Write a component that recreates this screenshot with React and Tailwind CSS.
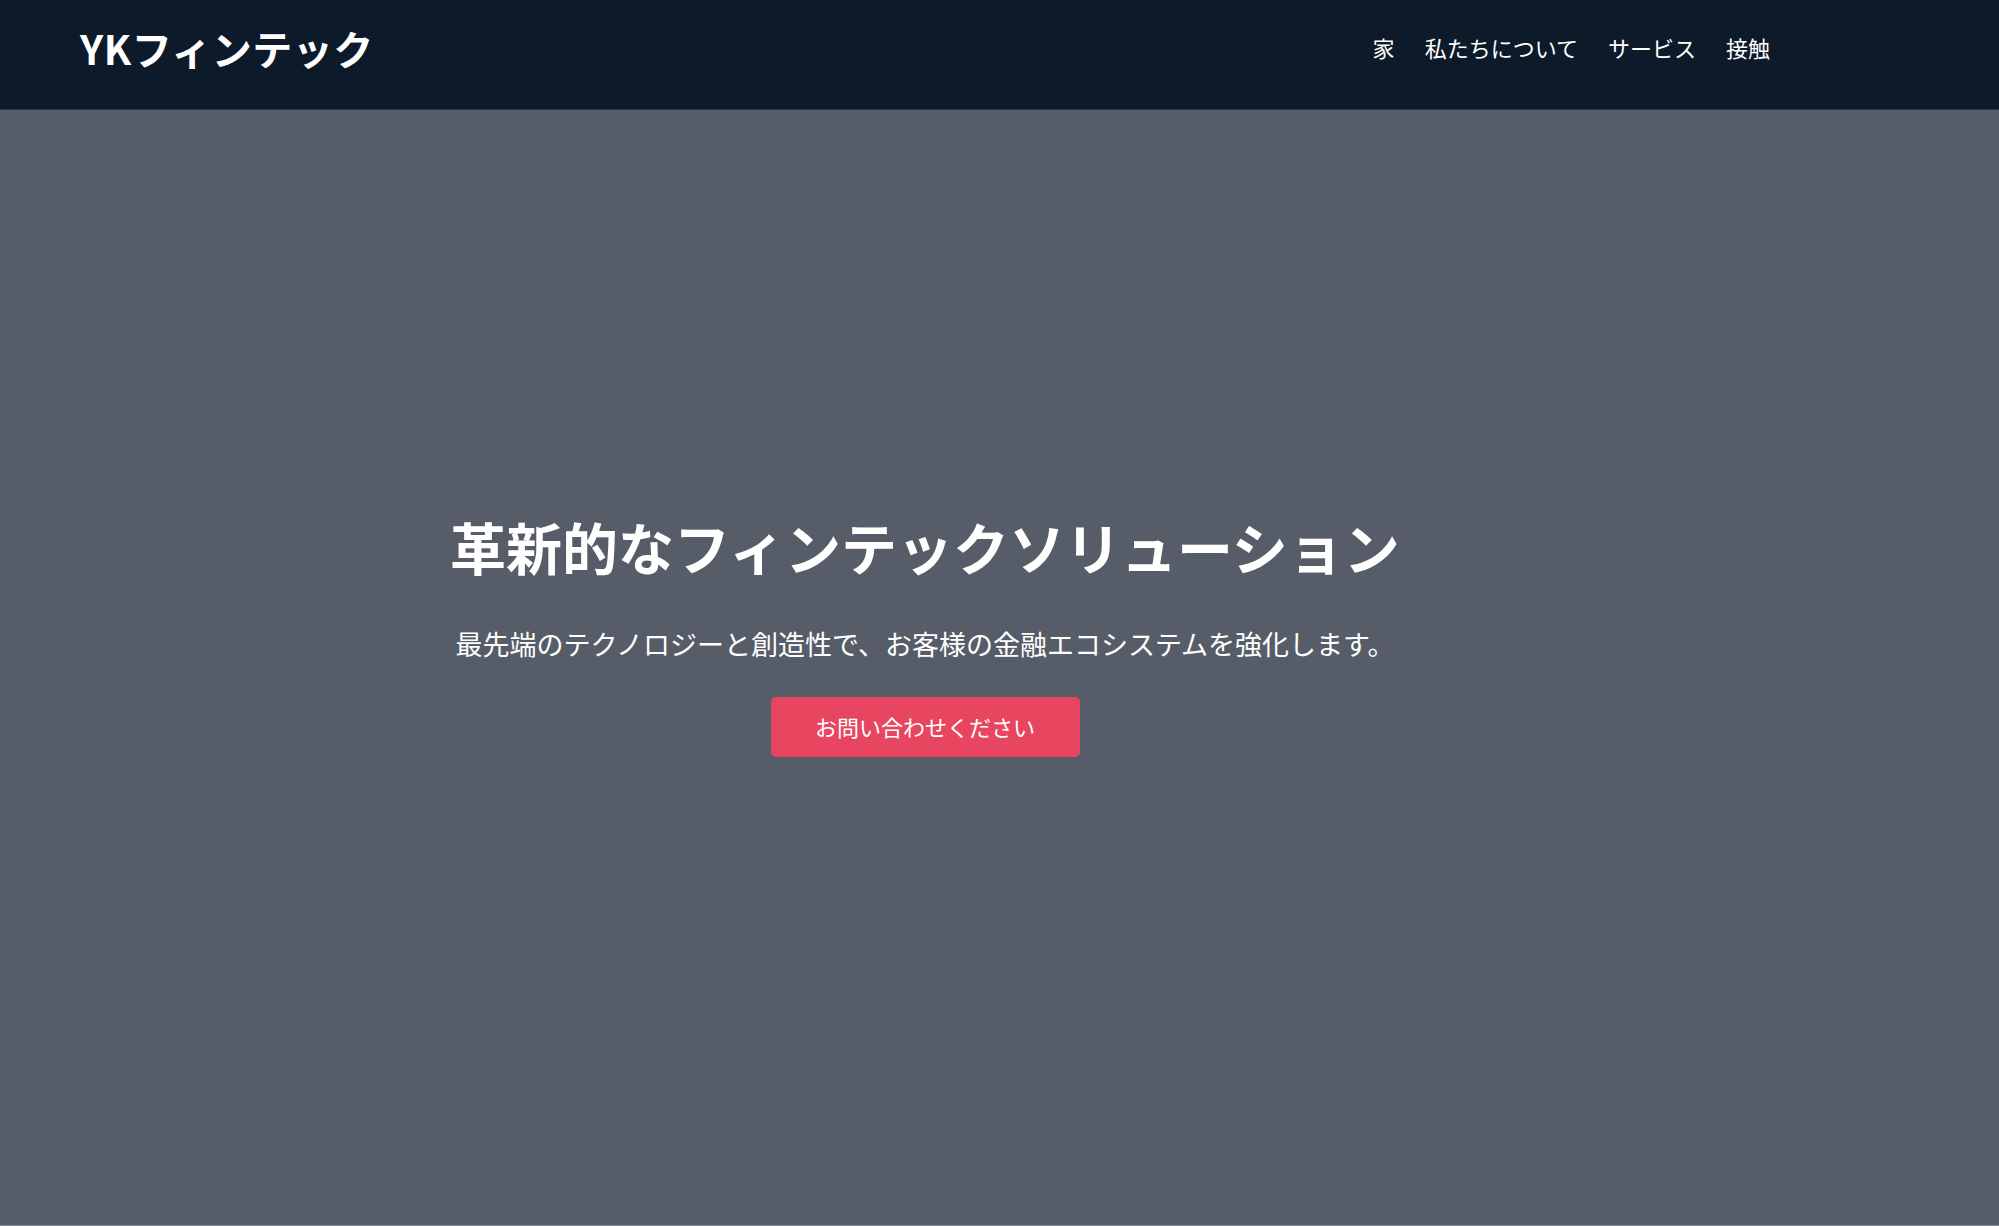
export default function App() {
  const links = ["家", "私たちについて", "サービス", "接触"];

  return (
    <div
      className="min-h-screen bg-[#565d69] text-white"
      style={{ fontFamily: '"Noto Sans CJK JP", "Noto Sans", sans-serif' }}
    >
      {/* Header */}
      <header className="bg-[#0c1a29] border-b border-[#2a3541] h-[110px]">
        <div className="w-[1850px] px-[80px] h-[95px] flex items-center justify-between">
          <div className="text-[40px] font-bold leading-[1.2] tracking-[0.5px]">
            YKフィンテック
          </div>
          <nav className="flex items-center gap-[30px] text-[22px] leading-[1.5]">
            {links.map((l) => (
              <a key={l} href="#" className="text-white">
                {l}
              </a>
            ))}
          </nav>
        </div>
      </header>

      {/* Hero */}
      <section className="h-[1115px] pt-[408px]">
        <div className="w-[1850px] flex flex-col items-center text-center">
          <h1 className="text-[56px] font-bold leading-none">
            革新的なフィンテックソリューション
          </h1>
          <p className="mt-[50px] text-[27px] leading-[1.5]">
            最先端のテクノロジーと創造性で、お客様の金融エコシステムを強化します。
          </p>
          <button className="mt-[32px] h-[60px] w-[309px] rounded-[5px] bg-[#e84660] text-[22px] text-white">
            お問い合わせください
          </button>
        </div>
      </section>
      <div className="h-[1px] bg-[#8a909b]" />
    </div>
  );
}
